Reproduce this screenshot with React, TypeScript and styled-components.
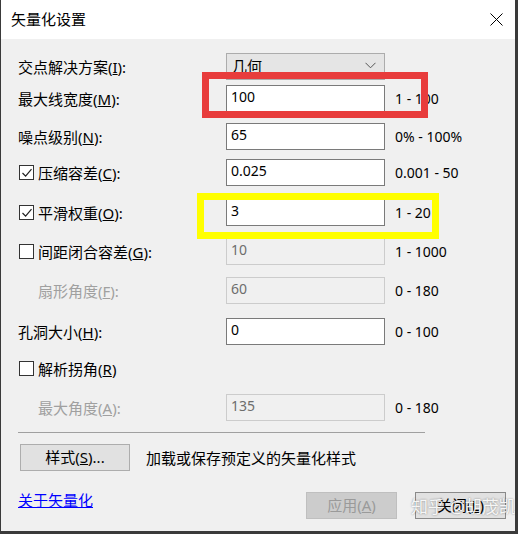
import styled, { createGlobalStyle } from 'styled-components';

const GlobalStyle = createGlobalStyle`
  html, body {
    margin: 0;
    padding: 0;
    background: #3a3a3a;
  }
  body {
    font-family: 'Noto Sans', 'Noto Sans CJK SC', sans-serif;
    font-size: 15px;
    color: #000;
  }
`;

const Dialog = styled.div`
  position: relative;
  width: 514px;
  height: 531px;
  margin-left: 1px;
  background: #f0f0f0;
  display: flex;
  flex-direction: column;
  overflow: hidden;
`;

const TitleBar = styled.div`
  height: 39px;
  background: #ffffff;
  display: flex;
  align-items: center;
  justify-content: space-between;
  padding: 0 12px 0 10px;
  flex-shrink: 0;
`;

const Title = styled.span`
  font-size: 15px;
  line-height: 20px;
  margin-top: -1px;
`;

const Body = styled.div`
  display: flex;
  flex-direction: column;
  padding: 14px 0 0 17px;
`;

const Row = styled.div<{ $gap?: number }>`
  display: grid;
  grid-template-columns: 198px 159px auto;
  column-gap: 10px;
  align-items: center;
  height: 27px;
  margin-top: ${(p) => p.$gap ?? 0}px;
`;

const Label = styled.label<{ $indent?: boolean; $disabled?: boolean }>`
  display: flex;
  align-items: center;
  gap: 4px;
  padding-left: ${(p) => (p.$indent ? 20 : 0)}px;
  color: ${(p) => (p.$disabled ? '#a0a0a0' : '#000')};
  line-height: 20px;
  white-space: nowrap;
`;

const Key = styled.span`
  text-decoration: underline;
`;

const Check = styled.span`
  width: 15px;
  height: 15px;
  margin-left: 1px;
  box-sizing: border-box;
  border: 1px solid #333333;
  background: #ffffff;
  display: inline-flex;
  align-items: center;
  justify-content: center;
`;

const Field = styled.div<{ $disabled?: boolean }>`
  box-sizing: border-box;
  height: 27px;
  border: 1px solid ${(p) => (p.$disabled ? '#cccccc' : '#7a7a7a')};
  background: ${(p) => (p.$disabled ? '#f0f0f0' : '#ffffff')};
  color: ${(p) => (p.$disabled ? '#6d6d6d' : '#000')};
  padding: 0 4px 4px;
  display: flex;
  align-items: center;
  font-size: 14px;
  line-height: 18px;
`;

const Select = styled.div`
  box-sizing: border-box;
  height: 27px;
  border: 1px solid #acacac;
  background: #e5e5e5;
  padding: 0 8px 2px 5px;
  display: flex;
  align-items: center;
  justify-content: space-between;
`;

const Range = styled.span`
  font-size: 14px;
  line-height: 18px;
  white-space: nowrap;
`;

const Separator = styled.div`
  width: 407px;
  height: 1px;
  background: #a0a0a0;
  margin-top: 11px;
`;

const StyleRow = styled.div`
  display: flex;
  align-items: center;
  gap: 16px;
  margin-top: 11px;
  padding-left: 2px;
`;

const Button = styled.button<{ $width: number; $disabled?: boolean; $dark?: boolean }>`
  box-sizing: border-box;
  width: ${(p) => p.$width}px;
  height: 27px;
  font-family: inherit;
  font-size: 15px;
  line-height: 20px;
  padding: 0 0 2px;
  border: 1px solid ${(p) => (p.$disabled ? '#bfbfbf' : p.$dark ? '#8a8a8a' : '#adadad')};
  background: ${(p) => (p.$disabled ? '#cccccc' : '#e1e1e1')};
  color: ${(p) => (p.$disabled ? '#9a9a9a' : '#000')};
  cursor: default;
`;

const Footer = styled.div`
  display: flex;
  align-items: flex-start;
  margin-top: 21px;
  padding-right: 9px;
`;

const Link = styled.a`
  color: #0000ff;
  text-decoration: underline;
  line-height: 16px;
  margin-right: auto;
`;

const ButtonGroup = styled.div`
  display: flex;
  gap: 18px;
`;

const Highlight = styled.div<{ $color: string }>`
  position: absolute;
  box-sizing: border-box;
  border: 7px solid ${(p) => p.$color};
  pointer-events: none;
`;

const Watermark = styled.span`
  position: absolute;
  left: 410px;
  top: 497px;
  color: rgba(255, 255, 255, 0.92);
  font-size: 17px;
  line-height: 20px;
  text-shadow: 0 0 2px rgba(0, 0, 0, 0.45);
  white-space: nowrap;
`;

const CheckMark = () => (
  <svg width="12" height="12" viewBox="0 0 12 12">
    <path d="M1.5 6 L4.6 9.2 L10.5 2.2" fill="none" stroke="#222" strokeWidth="1.2" />
  </svg>
);

const CheckBox = ({ checked }: { checked?: boolean }) => <Check>{checked && <CheckMark />}</Check>;

const Chevron = () => (
  <svg width="11" height="7" viewBox="0 0 11 7">
    <path d="M0.5 0.8 L5.5 5.8 L10.5 0.8" fill="none" stroke="#555" strokeWidth="1" />
  </svg>
);

const CloseIcon = () => (
  <svg width="13" height="13" viewBox="0 0 13 13">
    <path d="M0.5 0.5 L12.5 12.5 M12.5 0.5 L0.5 12.5" stroke="#000" strokeWidth="1" />
  </svg>
);

type Item = {
  gap: number;
  label: string;
  key: string;
  check?: boolean;
  checked?: boolean;
  indent?: boolean;
  disabled?: boolean;
  value?: string;
  range?: string;
  colon?: boolean;
};

const rows: Item[] = [
  { gap: 5, label: '最大线宽度', key: 'M', value: '100', range: '1 - 100' },
  { gap: 11, label: '噪点级别', key: 'N', value: '65', range: '0% - 100%' },
  { gap: 9, label: '压缩容差', key: 'C', check: true, checked: true, value: '0.025', range: '0.001 - 50' },
  { gap: 13, label: '平滑权重', key: 'O', check: true, checked: true, value: '3', range: '1 - 20' },
  { gap: 12, label: '间距闭合容差', key: 'G', check: true, value: '10', disabled: true, range: '1 - 1000' },
  { gap: 12, label: '扇形角度', key: 'F', indent: true, disabled: true, value: '60', range: '0 - 180' },
  { gap: 14, label: '孔洞大小', key: 'H', value: '0', range: '0 - 100' },
  { gap: 10, label: '解析拐角', key: 'R', check: true, colon: false },
  { gap: 12, label: '最大角度', key: 'A', indent: true, disabled: true, value: '135', range: '0 - 180' },
];

export default function App() {
  return (
    <>
      <GlobalStyle />
      <Dialog>
        <TitleBar>
          <Title>矢量化设置</Title>
          <CloseIcon />
        </TitleBar>
        <Body>
          <Row>
            <Label>
              <span>
                交点解决方案(<Key>I</Key>):
              </span>
            </Label>
            <Select>
              <span>几何</span>
              <Chevron />
            </Select>
          </Row>
          {rows.map((r) => (
            <Row key={r.key} $gap={r.gap}>
              <Label $indent={r.indent} $disabled={r.indent && r.disabled}>
                {r.check && <CheckBox checked={r.checked} />}
                <span>
                  {r.label}(<Key>{r.key}</Key>){r.colon === false ? '' : ':'}
                </span>
              </Label>
              {r.value !== undefined ? <Field $disabled={r.disabled}>{r.value}</Field> : <span />}
              {r.range ? <Range>{r.range}</Range> : <span />}
            </Row>
          ))}
          <Separator />
          <StyleRow>
            <Button $width={110}>
              样式(<Key>S</Key>)...
            </Button>
            <span>加载或保存预定义的矢量化样式</span>
          </StyleRow>
          <Footer>
            <Link>关于矢量化</Link>
            <ButtonGroup>
              <Button $width={91} $disabled>
                应用(<Key>A</Key>)
              </Button>
              <Button $width={91} $dark>
                关闭(<Key>L</Key>)
              </Button>
            </ButtonGroup>
          </Footer>
        </Body>
        <Highlight $color="#e83c3c" style={{ left: 201, top: 72, width: 226, height: 46 }} />
        <Highlight $color="#ffff00" style={{ left: 196, top: 193, width: 242, height: 46 }} />
        <Watermark>知乎 @胡茂凯</Watermark>
      </Dialog>
    </>
  );
}
